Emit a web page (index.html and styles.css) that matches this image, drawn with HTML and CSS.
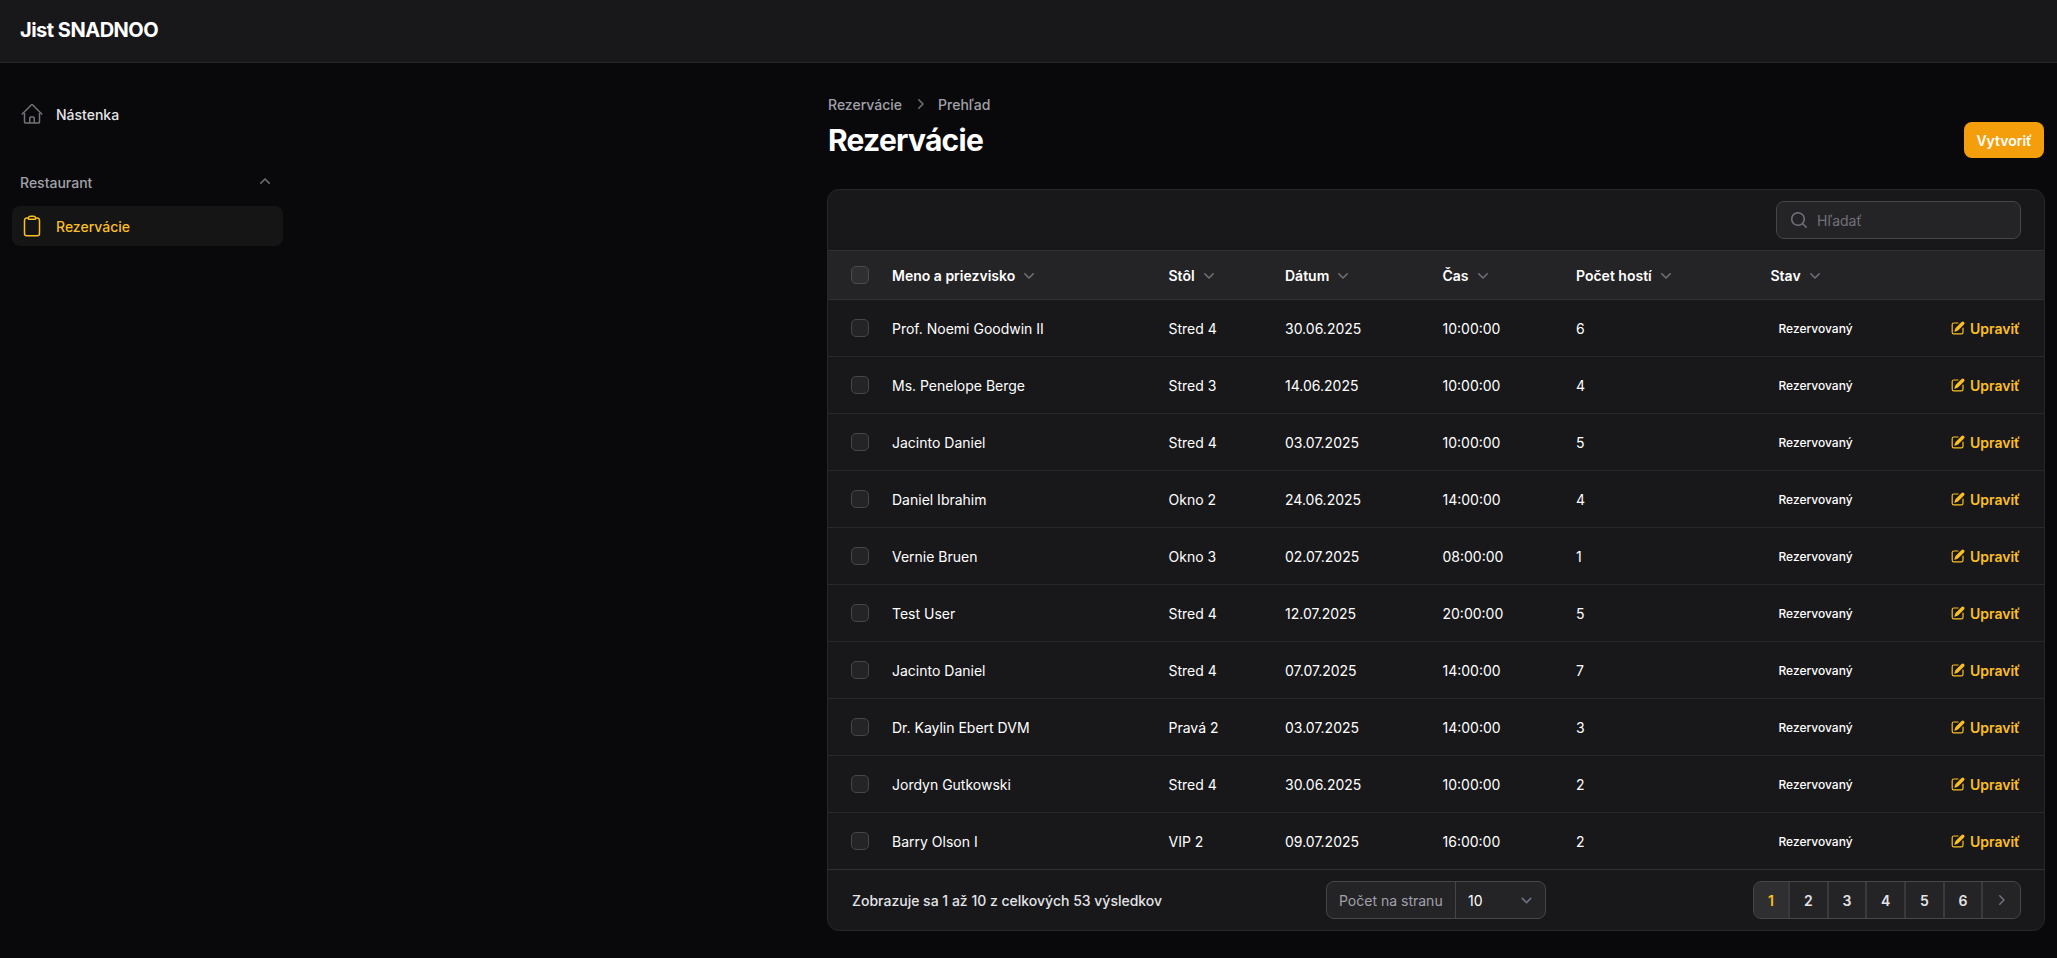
FILE: index.html
```
<!DOCTYPE html>
<html lang="sk">
<head>
<meta charset="utf-8">
<title>Rezervácie - Jist SNADNOO</title>
<link rel="stylesheet" href="styles.css">
</head>
<body>
<svg class="sprite" aria-hidden="true">
  <symbol id="down" viewBox="0 0 20 20"><path fill="currentColor" d="M5.22 8.22a.75.75 0 0 1 1.06 0L10 11.94l3.72-3.72a.75.75 0 1 1 1.06 1.06l-4.25 4.25a.75.75 0 0 1-1.06 0L5.22 9.28a.75.75 0 0 1 0-1.06Z"/></symbol>
  <symbol id="up" viewBox="0 0 20 20"><path fill="currentColor" d="M9.47 6.47a.75.75 0 0 1 1.06 0l4.25 4.25a.75.75 0 1 1-1.06 1.06L10 8.06l-3.72 3.72a.75.75 0 0 1-1.06-1.06l4.25-4.25Z"/></symbol>
  <symbol id="right" viewBox="0 0 20 20"><path fill="currentColor" d="M8.22 5.22a.75.75 0 0 1 1.06 0l4.25 4.25a.75.75 0 0 1 0 1.06l-4.25 4.25a.75.75 0 0 1-1.06-1.06L11.94 10 8.22 6.28a.75.75 0 0 1 0-1.06Z"/></symbol>
  <symbol id="edit" viewBox="0 0 20 20"><path fill="currentColor" d="m5.433 13.917 1.262-3.155A4 4 0 0 1 7.58 9.42l6.92-6.918a2.121 2.121 0 0 1 3 3l-6.92 6.918c-.383.383-.84.685-1.343.886l-3.154 1.262a.5.5 0 0 1-.65-.65Z"/><path fill="currentColor" d="M3.5 5.75c0-.69.56-1.25 1.25-1.25H10A.75.75 0 0 0 10 3H4.75A2.75 2.75 0 0 0 2 5.75v9.5A2.75 2.75 0 0 0 4.75 18h9.5A2.75 2.75 0 0 0 17 15.25V10a.75.75 0 0 0-1.5 0v5.25c0 .69-.56 1.25-1.25 1.25h-9.5c-.69 0-1.25-.56-1.25-1.25v-9.5Z"/></symbol>
</svg>
<header class="topbar"><div class="brand">Jist SNADNOO</div></header>
<div class="layout">
  <aside class="sidebar">
    <a class="nav-item">
      <svg class="nav-icon" viewBox="0 0 24 24"><path d="m2.25 12 8.954-8.955c.44-.439 1.152-.439 1.591 0L21.75 12M4.5 9.75v10.125c0 .621.504 1.125 1.125 1.125H9.75v-4.875c0-.621.504-1.125 1.125-1.125h2.25c.621 0 1.125.504 1.125 1.125V21h4.125c.621 0 1.125-.504 1.125-1.125V9.75M8.25 21h8.25"/></svg>
      <span>Nástenka</span>
    </a>
    <div class="nav-group">
      <div class="group-head"><span>Restaurant</span><svg class="icon20"><use href="#up"/></svg></div>
      <a class="nav-item active">
        <svg class="nav-icon" viewBox="0 0 24 24"><path d="M15.666 3.888A2.25 2.25 0 0 0 13.5 2.25h-3c-1.03 0-1.9.693-2.166 1.638m7.332 0c.055.194.084.4.084.612v0a.75.75 0 0 1-.75.75H9a.75.75 0 0 1-.75-.75v0c0-.212.03-.418.084-.612m7.332 0c.646.049 1.288.11 1.927.184 1.1.128 1.907 1.077 1.907 2.185V19.5a2.25 2.25 0 0 1-2.25 2.25H6.75A2.25 2.25 0 0 1 4.5 19.5V6.257c0-1.108.806-2.057 1.907-2.185a48.208 48.208 0 0 1 1.927-.184"/></svg>
        <span>Rezervácie</span>
      </a>
    </div>
  </aside>
  <main class="main">
    <div class="page-head">
      <div>
        <nav class="crumbs"><span>Rezervácie</span><svg class="icon20"><use href="#right"/></svg><span>Prehľad</span></nav>
        <h1>Rezervácie</h1>
      </div>
      <button class="create">Vytvoriť</button>
    </div>
    <section class="card">
      <div class="toolbar">
        <div class="search">
          <svg class="icon20" viewBox="0 0 20 20"><path fill="currentColor" d="M9 3.5a5.5 5.5 0 1 0 0 11 5.5 5.5 0 0 0 0-11ZM2 9a7 7 0 1 1 12.452 4.391l3.328 3.329a.75.75 0 1 1-1.06 1.06l-3.329-3.328A7 7 0 0 1 2 9Z"/></svg>
          <span>Hľadať</span>
        </div>
      </div>
      <div class="row head">
        <i class="check"></i>
        <div class="sort">Meno a priezvisko<svg class="icon20"><use href="#down"/></svg></div>
        <div class="sort">Stôl<svg class="icon20"><use href="#down"/></svg></div>
        <div class="sort">Dátum<svg class="icon20"><use href="#down"/></svg></div>
        <div class="sort">Čas<svg class="icon20"><use href="#down"/></svg></div>
        <div class="sort">Počet hostí<svg class="icon20"><use href="#down"/></svg></div>
        <div class="sort">Stav<svg class="icon20"><use href="#down"/></svg></div>
      </div>
      <div class="row"><i class="check"></i><div>Prof. Noemi Goodwin II</div><div>Stred 4</div><div>30.06.2025</div><div>10:00:00</div><div>6</div><div class="badge">Rezervovaný</div><a class="edit"><svg class="icon16"><use href="#edit"/></svg><span>Upraviť</span></a></div>
      <div class="row"><i class="check"></i><div>Ms. Penelope Berge</div><div>Stred 3</div><div>14.06.2025</div><div>10:00:00</div><div>4</div><div class="badge">Rezervovaný</div><a class="edit"><svg class="icon16"><use href="#edit"/></svg><span>Upraviť</span></a></div>
      <div class="row"><i class="check"></i><div>Jacinto Daniel</div><div>Stred 4</div><div>03.07.2025</div><div>10:00:00</div><div>5</div><div class="badge">Rezervovaný</div><a class="edit"><svg class="icon16"><use href="#edit"/></svg><span>Upraviť</span></a></div>
      <div class="row"><i class="check"></i><div>Daniel Ibrahim</div><div>Okno 2</div><div>24.06.2025</div><div>14:00:00</div><div>4</div><div class="badge">Rezervovaný</div><a class="edit"><svg class="icon16"><use href="#edit"/></svg><span>Upraviť</span></a></div>
      <div class="row"><i class="check"></i><div>Vernie Bruen</div><div>Okno 3</div><div>02.07.2025</div><div>08:00:00</div><div>1</div><div class="badge">Rezervovaný</div><a class="edit"><svg class="icon16"><use href="#edit"/></svg><span>Upraviť</span></a></div>
      <div class="row"><i class="check"></i><div>Test User</div><div>Stred 4</div><div>12.07.2025</div><div>20:00:00</div><div>5</div><div class="badge">Rezervovaný</div><a class="edit"><svg class="icon16"><use href="#edit"/></svg><span>Upraviť</span></a></div>
      <div class="row"><i class="check"></i><div>Jacinto Daniel</div><div>Stred 4</div><div>07.07.2025</div><div>14:00:00</div><div>7</div><div class="badge">Rezervovaný</div><a class="edit"><svg class="icon16"><use href="#edit"/></svg><span>Upraviť</span></a></div>
      <div class="row"><i class="check"></i><div>Dr. Kaylin Ebert DVM</div><div>Pravá 2</div><div>03.07.2025</div><div>14:00:00</div><div>3</div><div class="badge">Rezervovaný</div><a class="edit"><svg class="icon16"><use href="#edit"/></svg><span>Upraviť</span></a></div>
      <div class="row"><i class="check"></i><div>Jordyn Gutkowski</div><div>Stred 4</div><div>30.06.2025</div><div>10:00:00</div><div>2</div><div class="badge">Rezervovaný</div><a class="edit"><svg class="icon16"><use href="#edit"/></svg><span>Upraviť</span></a></div>
      <div class="row last"><i class="check"></i><div>Barry Olson I</div><div>VIP 2</div><div>09.07.2025</div><div>16:00:00</div><div>2</div><div class="badge">Rezervovaný</div><a class="edit"><svg class="icon16"><use href="#edit"/></svg><span>Upraviť</span></a></div>
      <footer class="pager">
        <div class="summary">Zobrazuje sa 1 až 10 z celkových 53 výsledkov</div>
        <div class="per-page"><span class="label">Počet na stranu</span><span class="value">10<svg class="caret" viewBox="0 0 20 20"><path d="m6 8 4 4 4-4"/></svg></span></div>
        <div class="pages"><span class="current">1</span><span>2</span><span>3</span><span>4</span><span>5</span><span>6</span><span class="next"><svg class="icon20"><use href="#right"/></svg></span></div>
      </footer>
    </section>
  </main>
</div>
</body>
</html>
```
FILE: styles.css
```
* { box-sizing: border-box; }
body {
  margin: 0;
  min-height: 958px;
  background: #09090b;
  color: #fff;
  font: 400 14px/20px Inter, sans-serif;
}
h1 { margin: 0; }
.sprite { display: none; }
.icon20 { width: 20px; height: 20px; flex: none; display: block; color: #71717a; }
.icon16 { width: 16px; height: 16px; flex: none; display: block; }

.topbar {
  height: 63px;
  padding: 0 20px 3px;
  display: flex;
  align-items: center;
  background: #18181b;
  border-bottom: 1px solid #27272a;
}
.brand { font-size: 20px; font-weight: 700; letter-spacing: -0.5px; }

.layout { display: flex; justify-content: space-between; }
.sidebar {
  width: 295px;
  padding: 31px 12px;
  display: flex;
  flex-direction: column;
  gap: 28px;
}
.nav-item {
  height: 40px;
  padding: 8px;
  display: flex;
  align-items: center;
  gap: 12px;
  border-radius: 8px;
  font-weight: 500;
  color: #e4e4e7;
}
.nav-item span, .group-head span, .search span, .edit span { padding-top: 2px; }
.nav-icon {
  width: 24px;
  height: 24px;
  fill: none;
  stroke: #71717a;
  stroke-width: 1.5;
  stroke-linecap: round;
  stroke-linejoin: round;
}
.active { background: #151516; color: #fbbf24; }
.active .nav-icon { stroke: #fbbf24; }
.nav-group { display: flex; flex-direction: column; gap: 4px; }
.group-head {
  height: 40px;
  padding: 0 8px;
  display: flex;
  align-items: center;
  justify-content: space-between;
  font-weight: 500;
  color: #a1a1aa;
}

.main { width: 1230px; padding: 31px 12px 0 0; }
.page-head {
  padding-right: 1px;
  padding-left: 1px;
  margin-bottom: 31px;
  display: flex;
  align-items: center;
  justify-content: space-between;
}
.crumbs {
  height: 20px;
  margin-bottom: 8px;
  display: flex;
  gap: 8px;
  font-weight: 500;
  color: #a1a1aa;
}
.crumbs span { padding-top: 1px; }
h1 { font-size: 30px; line-height: 36px; font-weight: 700; letter-spacing: -0.75px; }
.create {
  height: 36px;
  margin-top: 28px;
  padding: 2px 12px 0;
  border: 0;
  border-radius: 8px;
  background: #f59e0b;
  color: #fff;
  font: 600 14px/20px Inter, sans-serif;
}

.card {
  background: #18181b;
  border: 1px solid #27272a;
  border-radius: 12px;
}
.toolbar { height: 60px; padding: 11px 23px; display: flex; justify-content: flex-end; }
.search {
  width: 245px;
  height: 38px;
  padding: 0 12px;
  display: flex;
  align-items: center;
  gap: 8px;
  background: #242427;
  border: 1px solid #464649;
  border-radius: 8px;
  color: #71717a;
}
.row {
  height: 57px;
  display: grid;
  grid-template-columns: 64px 276.5px 116.5px 157.5px 133.5px 194.5px 150px 1fr;
  align-items: center;
  padding-right: 24px;
  border-bottom: 1px solid #28282b;
}
.row > div { padding-top: 2px; }
.row.last { border-bottom: 0; height: 56px; }
.head {
  height: 50px;
  background: #242427;
  border-top: 1px solid #303033;
  border-bottom-color: #303033;
  font-weight: 600;
}
.sort { display: flex; align-items: flex-start; gap: 4px; }
.sort .icon20 { margin-top: -1px; }
.check {
  width: 18px;
  height: 18px;
  margin-left: 23px;
  margin-top: -1px;
  background: #242427;
  border: 1px solid #464649;
  border-radius: 5px;
}
.head .check { background: #2f2f31; border-color: #4c4c4f; }
.row > .badge { padding-left: 8px; font-size: 12px; font-weight: 500; }
.edit {
  display: flex;
  justify-content: flex-end;
  align-items: center;
  gap: 4px;
  font-weight: 600;
  color: #fbbf24;
}

.pager {
  height: 61px;
  padding: 0 23px 0 24px;
  display: grid;
  grid-template-columns: 496px auto 1fr;
  column-gap: 0;
  align-items: center;
  border-top: 1px solid #303033;
}
.summary { width: 474px; padding-top: 2px; font-weight: 500; color: #e4e4e7; }
.pager { grid-template-columns: 474px 220px 1fr; }
.per-page {
  height: 38px;
  display: flex;
  background: #242427;
  border: 1px solid #464649;
  border-radius: 8px;
}
.label { width: 129px; padding: 9px 0 7px 12px; border-right: 1px solid #464649; color: #a1a1aa; white-space: nowrap; }
.value { flex: 1; padding: 9px 8px 7px 12px; display: flex; justify-content: space-between; }
.caret { width: 21px; height: 21px; margin-top: -1px; fill: none; stroke: #6b7280; stroke-width: 1.5; stroke-linecap: round; stroke-linejoin: round; }
.pages {
  width: 268px;
  justify-self: end;
  height: 38px;
  display: flex;
  overflow: hidden;
  background: #242427;
  border: 1px solid #464649;
  border-radius: 8px;
  font-weight: 600;
  color: #e4e4e7;
}
.pages span {
  width: 38.7px;
  padding: 9px 0 7px;
  text-align: center;
  border-right: 2px solid #3a3a3d;
}
.pages .current { width: 36px; background: #2f2f31; color: #fbbf24; }
.pages .next { flex: 1; padding: 8px 0 8px 8px; border-right: 0; }
```
